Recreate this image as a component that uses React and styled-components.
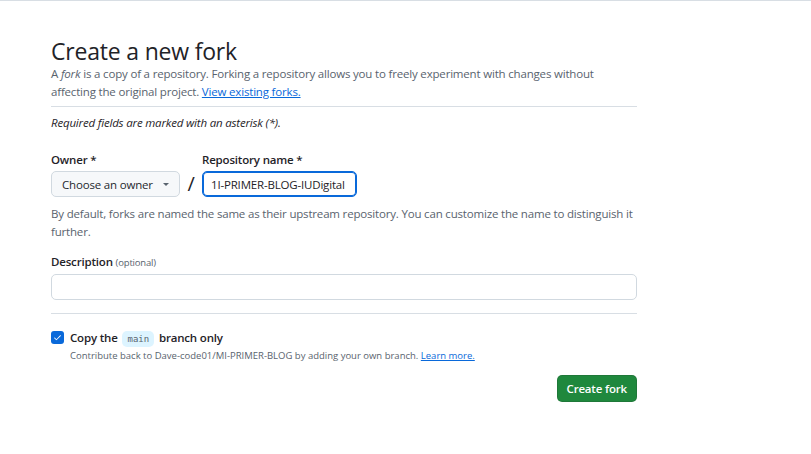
import React from 'react';
import styled, { createGlobalStyle } from 'styled-components';

const GlobalStyle = createGlobalStyle`
  html, body {
    margin: 0;
    padding: 0;
    background: #ffffff;
  }
  body {
    font-family: "Open Sans", "Noto Sans", sans-serif;
    color: #1f2328;
    letter-spacing: -0.18px;
    border-top: 1px solid #d8dee4;
  }
`;

const Page = styled.main`
  width: 586px;
  margin-left: 51px;
  padding-top: 36px;
`;

const Title = styled.h1`
  margin: 0;
  font-size: 23px;
  font-weight: 400;
  line-height: 28px;
  letter-spacing: -0.2px;
  color: #1f2328;
`;

const Lead = styled.p`
  margin: 0;
  font-size: 11.5px;
  line-height: 18px;
  color: #59636e;
  padding-bottom: 5px;
  border-bottom: 1px solid #d8dee4;
`;

const Link = styled.a`
  color: #0969da;
  text-decoration: underline;
`;

const Note = styled.p`
  margin: 7px 0 0;
  font-size: 11.5px;
  line-height: 18px;
  font-style: italic;
  color: #1f2328;
`;

const NameRow = styled.div`
  display: flex;
  align-items: flex-end;
  margin-top: 19px;
`;

const Field = styled.div`
  display: flex;
  flex-direction: column;
`;

const Label = styled.label`
  font-size: 11.5px;
  font-weight: 600;
  line-height: 18px;
  margin-bottom: 2px;
  color: #1f2328;
`;

const Optional = styled.span`
  font-size: 9.5px;
  font-weight: 400;
  color: #59636e;
`;

const OwnerButton = styled.button`
  box-sizing: border-box;
  display: flex;
  align-items: center;
  justify-content: space-between;
  white-space: nowrap;
  height: 26px;
  width: 129px;
  padding: 0 10px;
  border: 1px solid #d1d9e0;
  border-radius: 5px;
  background: #f6f8fa;
  font-family: inherit;
  letter-spacing: inherit;
  font-size: 11.5px;
  font-weight: 500;
  color: #25292e;
`;

const Caret = styled.span`
  width: 0;
  height: 0;
  border-left: 3.5px solid transparent;
  border-right: 3.5px solid transparent;
  border-top: 3.5px solid #59636e;
`;

const Slash = styled.span`
  width: 22px;
  text-align: center;
  font-size: 20px;
  line-height: 26px;
  color: #1f2328;
`;

const TextInput = styled.input`
  box-sizing: border-box;
  height: 26px;
  width: ${(p) => p.$width || '100%'};
  padding: 0 8px;
  border: 1px solid ${(p) => (p.$focused ? '#0969da' : '#d1d9e0')};
  box-shadow: ${(p) => (p.$focused ? 'inset 0 0 0 1px #0969da' : 'none')};
  border-radius: 5px;
  font-family: inherit;
  letter-spacing: inherit;
  font-size: 11.5px;
  color: #1f2328;
  outline: none;
  background: #fff;
`;

const Hint = styled.p`
  margin: 8px 0 0;
  font-size: 11.5px;
  line-height: 18px;
  color: #59636e;
`;

const DescField = styled(Field)`
  margin-top: 12px;
  padding-bottom: 13px;
  border-bottom: 1px solid #d8dee4;
`;

const CheckRow = styled.div`
  display: flex;
  gap: 6px;
  margin-top: 14px;
`;

const Box = styled.span`
  flex: none;
  width: 13px;
  height: 13px;
  margin-top: 3px;
  border-radius: 3px;
  background: #0969da;
  display: flex;
  align-items: center;
  justify-content: center;
`;

const CheckText = styled.div`
  display: flex;
  flex-direction: column;
`;

const CheckLabel = styled.span`
  font-size: 11.5px;
  font-weight: 600;
  line-height: 20px;
  color: #1f2328;
`;

const Code = styled.code`
  font-family: "DejaVu Sans Mono", monospace;
  font-size: 9px;
  font-weight: 400;
  letter-spacing: 0;
  color: #59636e;
  background: #ddf4ff;
  border-radius: 5px;
  padding: 3px 5px;
  margin: 0 2px;
`;

const SmallHint = styled.span`
  font-size: 9.5px;
  line-height: 14px;
  letter-spacing: 0;
  color: #59636e;
`;

const Actions = styled.div`
  display: flex;
  justify-content: flex-end;
  margin-top: 12px;
`;

const PrimaryButton = styled.button`
  height: 27px;
  padding: 0 9px;
  border: 1px solid rgba(31, 35, 40, 0.15);
  border-radius: 5px;
  background: #1f883d;
  color: #fff;
  font-family: inherit;
  letter-spacing: inherit;
  font-size: 11.5px;
  font-weight: 600;
`;

export default function App() {
  return (
    <>
      <GlobalStyle />
      <Page>
        <Title>Create a new fork</Title>
        <Lead>
          A <em>fork</em> is a copy of a repository. Forking a repository allows you to freely experiment with changes without
          affecting the original project. <Link href="#">View existing forks.</Link>
        </Lead>
        <Note>Required fields are marked with an asterisk (*).</Note>

        <NameRow>
          <Field>
            <Label>Owner *</Label>
            <OwnerButton>
              Choose an owner <Caret />
            </OwnerButton>
          </Field>
          <Slash>/</Slash>
          <Field>
            <Label>Repository name *</Label>
            <TextInput $focused $width="155px" defaultValue="1I-PRIMER-BLOG-IUDigital" />
          </Field>
        </NameRow>
        <Hint>
          By default, forks are named the same as their upstream repository. You can customize the name to distinguish it
          further.
        </Hint>

        <DescField>
          <Label>
            Description <Optional>(optional)</Optional>
          </Label>
          <TextInput />
        </DescField>

        <CheckRow>
          <Box>
            <svg width="9" height="9" viewBox="0 0 16 16" fill="#fff">
              <path d="M13.78 4.22a.75.75 0 0 1 0 1.06l-7.25 7.25a.75.75 0 0 1-1.06 0L2.22 9.28a.75.75 0 0 1 1.06-1.06L6 10.94l6.72-6.72a.75.75 0 0 1 1.06 0Z" />
            </svg>
          </Box>
          <CheckText>
            <CheckLabel>
              Copy the <Code>main</Code> branch only
            </CheckLabel>
            <SmallHint>
              Contribute back to Dave-code01/MI-PRIMER-BLOG by adding your own branch. <Link href="#">Learn more.</Link>
            </SmallHint>
          </CheckText>
        </CheckRow>

        <Actions>
          <PrimaryButton>Create fork</PrimaryButton>
        </Actions>
      </Page>
    </>
  );
}
